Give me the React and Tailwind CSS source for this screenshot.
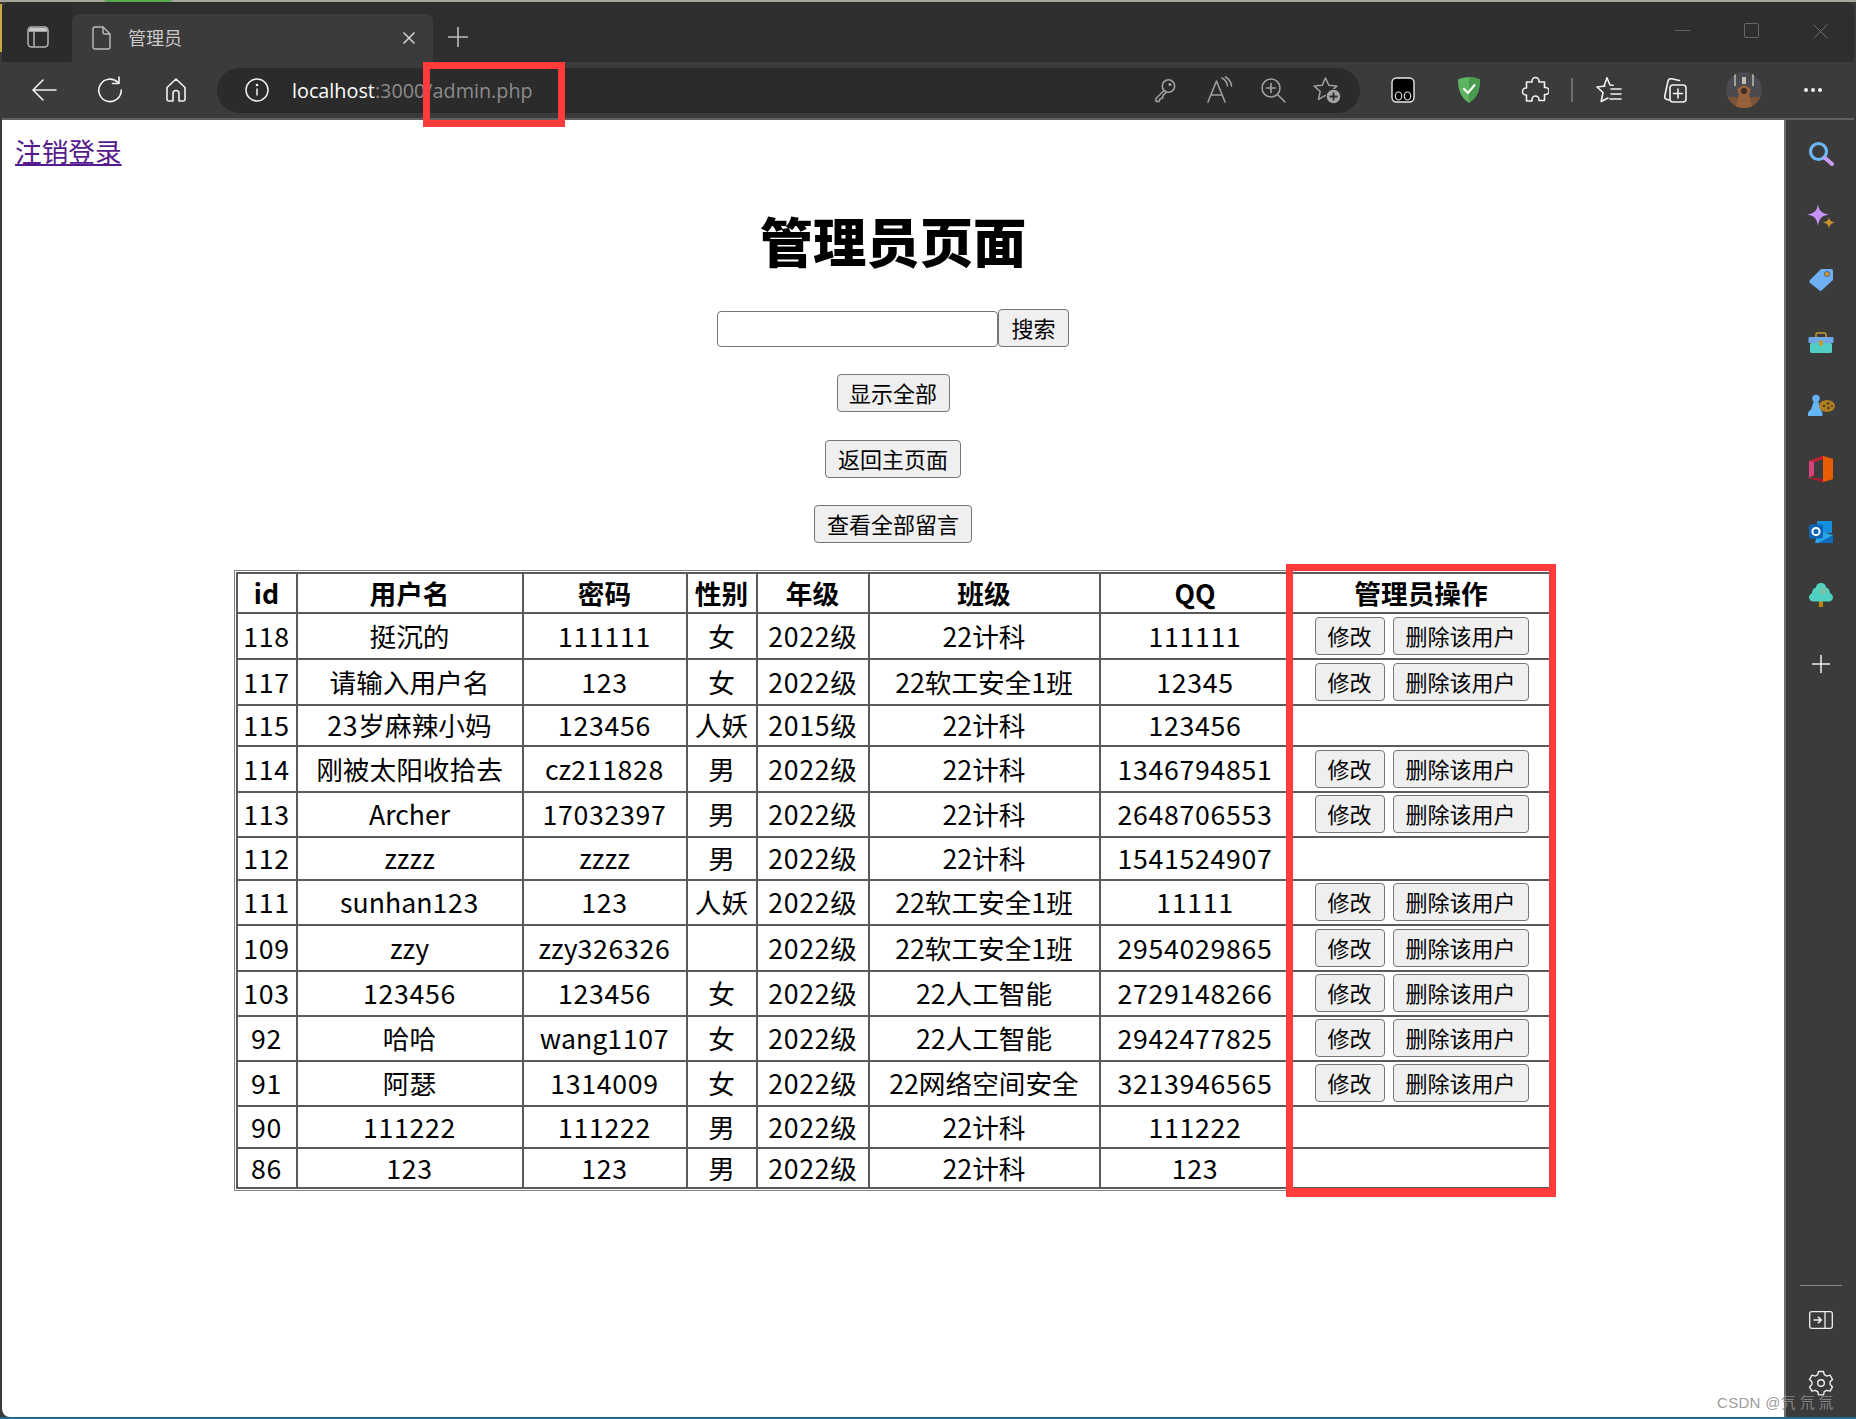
import React from "react";

const cjk = "font-['Noto_Sans_CJK_SC','Microsoft_YaHei',sans-serif]";

const rows = [
  ["118", "挺沉的", "111111", "女", "2022级", "22计科", "111111", true, "h-[46px]"],
  ["117", "请输入用户名", "123", "女", "2022级", "22软工安全1班", "12345", true, "h-[46px]"],
  ["115", "23岁麻辣小妈", "123456", "人妖", "2015级", "22计科", "123456", false, "h-[41px]"],
  ["114", "刚被太阳收拾去", "cz211828", "男", "2022级", "22计科", "1346794851", true, "h-[46px]"],
  ["113", "Archer", "17032397", "男", "2022级", "22计科", "2648706553", true, "h-[45px]"],
  ["112", "zzzz", "zzzz", "男", "2022级", "22计科", "1541524907", false, "h-[43px]"],
  ["111", "sunhan123", "123", "人妖", "2022级", "22软工安全1班", "11111", true, "h-[45px]"],
  ["109", "zzy", "zzy326326", "", "2022级", "22软工安全1班", "2954029865", true, "h-[46px]"],
  ["103", "123456", "123456", "女", "2022级", "22人工智能", "2729148266", true, "h-[45px]"],
  ["92", "哈哈", "wang1107", "女", "2022级", "22人工智能", "2942477825", true, "h-[45px]"],
  ["91", "阿瑟", "1314009", "女", "2022级", "22网络空间安全", "3213946565", true, "h-[45px]"],
  ["90", "111222", "111222", "男", "2022级", "22计科", "111222", false, "h-[42px]"],
  ["86", "123", "123", "男", "2022级", "22计科", "123", false, "h-[40px]"],
];

const headers = ["id", "用户名", "密码", "性别", "年级", "班级", "QQ", "管理员操作"];

function Cell({ text, col }) {
  if (col === 5) return text;
  return text.split(/(\d+)/).map((part, i) =>
    /^\d+$/.test(part) ? (
      <span key={i} className="tracking-[0.7px]">{part}</span>
    ) : (
      part
    )
  );
}

function NativeButton({ children, className = "" }) {
  return (
    <button className={`inline-flex items-center justify-center h-[38px] pb-[2px] rounded-[4px] border border-[#767676] bg-[#efefef] text-[22px] leading-none text-black ${className}`}>
      {children}
    </button>
  );
}

const stroke = { fill: "none", stroke: "currentColor", strokeWidth: 1.6, strokeLinecap: "round", strokeLinejoin: "round" };

function Ico({ w = 28, h = 28, vb = "0 0 28 28", className = "", children }) {
  return (
    <svg width={w} height={h} viewBox={vb} className={`shrink-0 ${className}`} {...stroke}>
      {children}
    </svg>
  );
}

function TitleBar() {
  return (
    <div className="flex h-[60px] shrink-0 bg-[#2e2e2e] rounded-t-[8px] overflow-hidden">
      <div className="flex items-center justify-center w-[70px] h-[60px] bg-[#2b2b2b] rounded-br-[6px] pl-[2px] pt-[14px] pb-[4px]">
        <svg width="22" height="22" viewBox="0 0 22 22" fill="none">
          <rect x="1" y="1" width="20" height="20" rx="3.5" stroke="#b5b5b5" strokeWidth="1.5" />
          <path d="M2 5v-1a2 2 0 0 1 2-2h14a2 2 0 0 1 2 2v1.8H2z" fill="#c9c9c9" />
          <path d="M7 6v15" stroke="#b5b5b5" strokeWidth="1.5" />
        </svg>
      </div>
      <div className="flex items-center w-[361px] h-[48px] mt-[12px] bg-[#3b3b3b] rounded-t-[7px] text-[#c9c9c9]">
        <svg width="19" height="24" viewBox="0 0 19 24" fill="none" className="ml-[20px]" stroke="#bdbdbd" strokeWidth="1.4" strokeLinejoin="round">
          <path d="M3 1h8l7 7v13a2 2 0 0 1-2 2H3a2 2 0 0 1-2-2V3a2 2 0 0 1 2-2z" />
          <path d="M11 1v5a2 2 0 0 0 2 2h5" />
        </svg>
        <span className={`${cjk} ml-[17px] pb-[2px] text-[18px] leading-none w-[54px] whitespace-nowrap`}>管理员</span>
        <svg width="14" height="14" viewBox="0 0 14 14" className="ml-[220px]" stroke="#cfcfcf" strokeWidth="1.6">
          <path d="M1.5 1.5l11 11M12.5 1.5l-11 11" />
        </svg>
      </div>
      <svg width="22" height="22" viewBox="0 0 22 22" className="ml-[14px] mt-[24px]" stroke="#bdbdbd" strokeWidth="1.6">
        <path d="M11 1v20M1 11h20" />
      </svg>
      <div className="flex-1" />
      <div className="w-[15px] h-[1px] bg-[#666666] mt-[28px]" />
      <div className="w-[15px] h-[15px] ml-[54px] mt-[21px] rounded-[2px] border border-[#666666]" />
      <svg width="15" height="15" viewBox="0 0 15 15" className="ml-[54px] mt-[22px] mr-[26px]" stroke="#6e6e6e" strokeWidth="1">
        <path d="M0.5 0.5l14 14M14.5 0.5l-14 14" />
      </svg>
    </div>
  );
}

function Toolbar() {
  return (
    <div className="flex items-center h-[58px] shrink-0 bg-[#3b3b3b] border-b-2 border-[#606060] text-[#f2f2f2]">
      <Ico className="ml-[28px]">
        <path d="M26 14H3M13 4L3 14l10 10" />
      </Ico>
      <Ico className="ml-[38px]">
        <path d="M22 6.5A11.2 11.2 0 1 0 25.2 14" />
        <path d="M23 1v6.5h-6.5" />
      </Ico>
      <Ico className="ml-[38px]">
        <path d="M5 11.5L14 3l9 8.5V23a2 2 0 0 1-2 2h-4v-7.5a3 3 0 0 0-6 0V25H7a2 2 0 0 1-2-2z" />
      </Ico>
      <div className="flex items-center w-[1143px] h-[45px] ml-[27px] rounded-full bg-[#2b2b2b]">
        <svg width="24" height="24" viewBox="0 0 24 24" fill="none" stroke="#f0f0f0" strokeWidth="1.5" className="ml-[28px]">
          <circle cx="12" cy="12" r="11" />
          <path d="M12 10.5v7" />
          <circle cx="12" cy="7" r="0.6" fill="#f0f0f0" />
        </svg>
        <span className="ml-[23px] mt-[1px] font-['Open_Sans',sans-serif] text-[19.8px] leading-none whitespace-nowrap text-white">
          localhost<span className="text-[#8b8b8b]">:3000/admin.php</span>
        </span>
        <div className="flex-1" />
        <div className="flex items-center gap-[26px] mr-[19px] text-[#a0a0a0]">
          <Ico>
            <circle cx="17.5" cy="10" r="6.2" />
            <path d="M13 14.5L5 22.5v3h3l1-2.500 2.500-1 .5-2.500 3-3" />
            <circle cx="19" cy="8.5" r="0.8" />
          </Ico>
          <Ico>
            <path d="M3 26L11.500 5 20 26M6 19h11" />
            <path d="M17 2c3 1.500 5 4 5.500 8M20.500 1c3.500 2 5.500 5 6 9" />
          </Ico>
          <Ico>
            <circle cx="12" cy="12" r="9" />
            <path d="M12 7.500v9M7.500 12h9M19 19l7 7" />
          </Ico>
          <svg width="28" height="28" viewBox="0 0 28 28" className="shrink-0">
            <path d="M12.500 2l3.300 7.300 8 .8-6 5.400 1.700 7.800-7-4-7 4 1.700-7.800-6-5.400 8-.8z" fill="none" stroke="#a0a0a0" strokeWidth="1.500" strokeLinejoin="round" />
            <circle cx="20.500" cy="20.500" r="7.200" fill="#a5a5a5" stroke="#2b2b2b" strokeWidth="1" />
            <path d="M20.500 16.500v8M16.500 20.500h8" stroke="#2b2b2b" strokeWidth="1.800" />
          </svg>
        </div>
      </div>
      <svg width="28" height="28" viewBox="0 0 28 28" className="ml-[29px] shrink-0">
        <rect x="3" y="2" width="22" height="24" rx="4.500" fill="#000" stroke="#e8e8e8" strokeWidth="1.400" />
        <ellipse cx="9.500" cy="20" rx="3.200" ry="4" fill="none" stroke="#dcdcdc" strokeWidth="1.200" />
        <ellipse cx="18.500" cy="20" rx="3.200" ry="4" fill="none" stroke="#dcdcdc" strokeWidth="1.200" />
      </svg>
      <svg width="28" height="28" viewBox="0 0 28 28" className="ml-[38px] shrink-0">
        <path d="M14 1c4 0 8 1 11 2.500 0 9-2 18-11 23.500C5 21.500 3 12.500 3 3.500 6 2 10 1 14 1z" fill="#5cb360" />
        <path d="M14 1c4 0 8 1 11 2.500 0 9-2 18-11 23.500z" fill="#4a9a50" />
        <path d="M9 13l4 4 6.500-8" fill="none" stroke="#fff" strokeWidth="2" strokeLinecap="round" strokeLinejoin="round" />
      </svg>
      <Ico className="ml-[38px]">
        <path d="M11 6V5a3.500 3.500 0 0 1 7 0v1h5.500v5.500H24.500a3.500 3.500 0 0 1 0 7H23.500V24.500H18v-1a3.500 3.500 0 0 0-7 0v1.500H5.500V19H5a3.500 3.500 0 0 1 0-7h.5V6z" />
      </Ico>
      <div className="w-[2px] h-[24px] ml-[22px] bg-[#6d6d6d]" />
      <Ico className="ml-[22px]">
        <path d="M12 2l3 7 3 .3M10 10L2 11l6 5.500-1.800 9L13 22" />
        <path d="M16 13h10M16 18h10M15 23h11" />
        <path d="M9 10l3-8" />
      </Ico>
      <Ico className="ml-[37px]">
        <path d="M9 24l-2-.5a3 3 0 0 1-2.200-3.500L8 5a3 3 0 0 1 3.500-2.200l8 1.700" />
        <rect x="10" y="9" width="16" height="17" rx="3" />
        <path d="M18 13v9M13.500 17.500h9" />
      </Ico>
      <svg width="36" height="36" viewBox="0 0 36 36" className="ml-[38px] shrink-0">
        <defs>
          <clipPath id="av"><circle cx="18" cy="18" r="18" /></clipPath>
        </defs>
        <g clipPath="url(#av)">
          <rect width="36" height="36" fill="#4a4a50" />
          <rect x="0" y="25" width="36" height="11" fill="#7a5238" />
          <rect x="8" y="2" width="2" height="12" fill="#a8a296" />
          <rect x="26" y="2" width="2" height="12" fill="#a8a296" />
          <rect x="16" y="5" width="4" height="7" fill="#c4beb2" />
          <path d="M11 17l7-4 7 4-2 6 4 14H9l4-14z" fill="#96603a" />
          <circle cx="18" cy="19" r="3" fill="#3c2a1d" />
        </g>
      </svg>
      <svg width="20" height="6" viewBox="0 0 20 6" className="ml-[41px] shrink-0" fill="#f2f2f2">
        <circle cx="3" cy="3" r="2" />
        <circle cx="10" cy="3" r="2" />
        <circle cx="17" cy="3" r="2" />
      </svg>
    </div>
  );
}

function SideIcon({ children }) {
  return <div className="flex items-center justify-center h-[63px]">{children}</div>;
}

function Sidebar() {
  return (
    <div className="flex flex-col w-[70px] shrink-0 bg-[#3b3b3b] border-l-2 border-[#6c6c6c] pl-[1px] rounded-br-[8px]">
      <div className="h-[2px]" />
      <SideIcon>
        <svg width="26" height="26" viewBox="0 0 26 26" fill="none">
          <circle cx="10.500" cy="10.500" r="8" stroke="#6db8f8" strokeWidth="3.200" />
          <path d="M17 17l7 6" stroke="#c79cf2" strokeWidth="4" strokeLinecap="round" />
        </svg>
      </SideIcon>
      <SideIcon>
        <svg width="28" height="26" viewBox="0 0 28 26">
          <path d="M11 0c1 7 4 9.500 11 10.500-7 1-10 4-11 11.500-1-7.500-4-10.500-11-11.500 7-1 10-3.500 11-10.500z" fill="#c592f6" />
          <path d="M22 13c.5 3.500 2 4.500 6 5.500-4 .5-5.500 2.500-6 6-.5-3.500-2-5.500-6-6 4-1 5.500-2 6-5.500z" fill="#c9942b" />
        </svg>
      </SideIcon>
      <SideIcon>
        <svg width="26" height="24" viewBox="0 0 26 24">
          <path d="M13 1h10a2 2 0 0 1 2 2v9l-11 10a2 2 0 0 1-3 0l-9-7a2 2 0 0 1 0-3z" fill="#6fb0f5" />
          <circle cx="19" cy="6" r="2.600" fill="#d7952a" stroke="#35607f" strokeWidth="0.8" />
        </svg>
      </SideIcon>
      <SideIcon>
        <svg width="26" height="22" viewBox="0 0 26 22">
          <path d="M8 5V2.500a1.500 1.500 0 0 1 1.500-1.500h7A1.500 1.500 0 0 1 18 2.500V5" fill="none" stroke="#c09a36" strokeWidth="1.600" />
          <rect x="0.500" y="5" width="25" height="6" rx="1" fill="#72a8e8" />
          <rect x="2" y="11" width="22" height="10" rx="1.500" fill="#52cfc4" />
          <rect x="11" y="8.500" width="4" height="5" rx="1" fill="#c79a2a" />
        </svg>
      </SideIcon>
      <SideIcon>
        <svg width="28" height="24" viewBox="0 0 28 24">
          <circle cx="9" cy="4.500" r="3.800" fill="#66aff2" />
          <path d="M6.500 8h5l1 5 3 6v3H1v-3c0-1.500 2-2.500 3-3.500z" fill="#66b5f5" />
          <ellipse cx="20" cy="12" rx="8" ry="6" fill="#b07f23" />
          <circle cx="17" cy="12" r="1.300" fill="#4a3a20" />
          <circle cx="21" cy="9.500" r="1.300" fill="#4a3a20" />
          <circle cx="21.500" cy="14" r="1.300" fill="#4a3a20" />
          <circle cx="25" cy="12" r="1" fill="#4a3a20" />
        </svg>
      </SideIcon>
      <SideIcon>
        <svg width="24" height="28" viewBox="0 0 24 26">
          <path d="M14 0l10 3v20l-10 3-14-4 14 1V3L5 6v13l-5 3V5z" fill="#d83b01" />
          <path d="M14 0L0 5v17l5-3V6l9-3z" fill="#c01f3c" />
          <path d="M0 5l5 1v13l-5 3z" fill="#d6437c" />
          <path d="M14 0l10 3v20l-10 3V23V3z" fill="#e85d04" />
          <path d="M0 22l14 1v3z" fill="#b3123a" />
        </svg>
      </SideIcon>
      <SideIcon>
        <svg width="24" height="24" viewBox="0 0 24 22">
          <rect x="8" y="0" width="15" height="12" fill="#1490df" />
          <path d="M9 10l15 4v8H6z" fill="#28a8ea" />
          <path d="M9 22l15-8v8z" fill="#0f6cbd" />
          <rect x="0" y="3.500" width="14" height="14" rx="1.500" fill="#0a64b8" />
          <circle cx="7" cy="10.500" r="3.600" fill="none" stroke="#fff" strokeWidth="2" />
        </svg>
      </SideIcon>
      <SideIcon>
        <svg width="24" height="26" viewBox="0 0 24 24">
          <rect x="10" y="16" width="4" height="8" fill="#b8860b" />
          <path d="M12 0c3.500 0 5 2.500 5 4.500 2.500.5 4 3 4 5.500 2 1 3 3 3 4.500 0 2.200-2 4-4 4H4c-2 0-4-1.800-4-4C0 13 1 11 3 10c0-2.500 1.500-5 4-5.500C7 2.500 8.500 0 12 0z" fill="#4fd0c0" />
          <circle cx="14" cy="8" r="3.500" fill="#7ac2a5" />
        </svg>
      </SideIcon>
      <div className="flex items-center justify-center h-[75px]">
        <svg width="18" height="18" viewBox="0 0 18 18" stroke="#f0f0f0" strokeWidth="1.500">
          <path d="M9 0v18M0 9h18" />
        </svg>
      </div>
      <div className="flex-1" />
      <div className="flex flex-col items-center">
        <div className="w-[42px] h-[1px] bg-[#8a8a8a]" />
        <svg width="24" height="18" viewBox="0 0 24 18" fill="none" stroke="#f0f0f0" strokeWidth="1.300" className="mt-[25px]">
          <rect x="0.700" y="0.700" width="22.600" height="16.600" rx="2" />
          <path d="M16 1v16" />
          <path d="M4.500 9h7.500M9 5.800L12.200 9 9 12.200" strokeWidth="1.600" />
        </svg>
        <svg width="26" height="26" viewBox="0 0 26 26" fill="none" stroke="#f0f0f0" strokeWidth="1.400" strokeLinejoin="round" className="mt-[41px] mb-[21px]">
          <path d="M10.500 1.500h5l.8 3.200 2.500 1.400 3.200-.9 2.500 4.300-2.400 2.300v2.800l2.400 2.300-2.500 4.300-3.200-.9-2.500 1.400-.8 3.200h-5l-.8-3.200-2.500-1.400-3.200.9-2.500-4.300 2.400-2.300v-2.800L1.500 9.500 4 5.200l3.200.9 2.500-1.400z" />
          <circle cx="13" cy="13" r="3.300" />
        </svg>
      </div>
    </div>
  );
}

function DataTable() {
  return (
    <div className="w-[1319px] mt-[27px] border border-[#808080] p-[1px] shrink-0">
      <table className={`${cjk} table-fixed w-[1315px] border-separate border-spacing-0 border-r-2 border-b-2 border-[#5a5a5a] text-black text-[26.67px] leading-none`}>
        <colgroup>
          <col className="w-[60px]" />
          <col className="w-[226px]" />
          <col className="w-[164px]" />
          <col className="w-[70px]" />
          <col className="w-[112px]" />
          <col className="w-[231px]" />
          <col className="w-[191px]" />
          <col className="w-[261px]" />
        </colgroup>
        <thead>
          <tr>
            {headers.map((h) => (
              <th key={h} className="h-[40px] p-0 text-center font-bold border-l-2 border-t-2 border-[#5a5a5a]">{h}</th>
            ))}
          </tr>
        </thead>
        <tbody>
          {rows.map((r) => (
            <tr key={r[0]}>
              {r.slice(0, 7).map((c, i) => (
                <td key={i} className={`${r[8]} p-0 text-center whitespace-nowrap border-l-2 border-t-2 border-[#5a5a5a]`}>
                  <Cell text={c} col={i} />
                </td>
              ))}
              <td className={`${r[8]} p-0 border-l-2 border-t-2 border-[#5a5a5a]`}>
                {r[7] && (
                  <div className="flex items-center justify-center gap-[8px] pl-[1px] mb-[1px]">
                    <NativeButton className="w-[70px]">修改</NativeButton>
                    <NativeButton className="w-[136px]">删除该用户</NativeButton>
                  </div>
                )}
              </td>
            </tr>
          ))}
        </tbody>
      </table>
    </div>
  );
}

function Page() {
  return (
    <div className={`${cjk} flex-1 flex flex-col items-center bg-white text-black`}>
      <a href="#" className="self-start ml-[13px] mt-[13px] text-[26.67px] leading-[36px] text-[#551a8b] underline">注销登录</a>
      <h1 className="mt-[41px] text-[53.3px] leading-[60px] font-black">管理员页面</h1>
      <div className="flex items-end mt-[39px]">
        <div className="w-[281px] h-[36px] rounded-[4px] border border-[#767676] bg-white" />
        <NativeButton className="w-[71px]">搜索</NativeButton>
      </div>
      <NativeButton className="w-[113px] mt-[27px]">显示全部</NativeButton>
      <NativeButton className="w-[136px] mt-[28px]">返回主页面</NativeButton>
      <NativeButton className="w-[158px] mt-[27px]">查看全部留言</NativeButton>
      <DataTable />
    </div>
  );
}

export default function App() {
  return (
    <div className="relative w-[1856px] h-[1419px] overflow-hidden bg-[#3a3a3a] px-[2px] pt-[2px]">
      <div className="absolute left-0 right-0 top-0 h-[2px] bg-[linear-gradient(to_right,#a8a49c_0,#a8a49c_5.6%,#5aa84e_5.7%,#5aa84e_9.2%,#a8a49c_9.3%,#a8a49c_100%)]" />
      <div className="absolute left-0 top-[4px] w-[2px] h-[48px] bg-[#c9a93f]" />
      <div className="flex flex-col h-[1415px] rounded-[8px] overflow-hidden bg-[#3b3b3b] relative">
        <TitleBar />
        <Toolbar />
        <div className="flex flex-1 min-h-0">
          <Page />
          <Sidebar />
        </div>
      </div>
      <div className="absolute left-0 right-0 bottom-0 h-[2px] bg-[#1d6a8f]" />
      <div className="absolute left-[423px] top-[62px] w-[142px] h-[65px] border-[7px] border-[#ff3b3b]" />
      <div className="absolute left-[1286px] top-[564px] w-[270px] h-[633px] border-[7px] border-b-[9px] border-[#ff3b3b]" />
      <div className="absolute left-[1717px] top-[1393px] font-['Liberation_Sans',sans-serif] text-[15px] leading-[18px] tracking-[0.3px] text-[#8f8f8f]/90 whitespace-nowrap">
        CSDN @<span className={cjk}>氕 氘 氚</span>
      </div>
    </div>
  );
}
